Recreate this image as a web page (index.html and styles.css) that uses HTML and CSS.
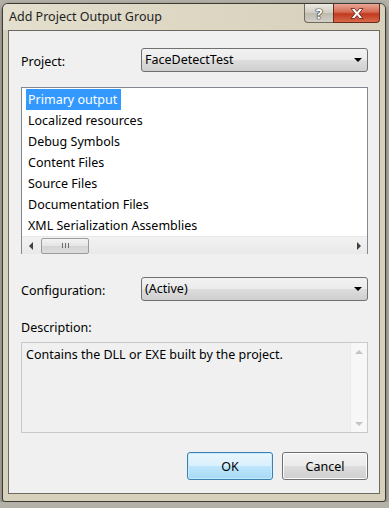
FILE: index.html
```html
<!DOCTYPE html>
<html lang="en">
<head>
  <meta charset="utf-8">
  <title>Add Project Output Group</title>
  <link rel="stylesheet" href="styles.css">
</head>
<body>
  <div class="window">
    <div class="titlebar">
      <span class="title">Add Project Output Group</span>
      <div class="caption-buttons">
        <span class="cap-btn help">?</span>
        <span class="cap-btn close">
          <svg width="14" height="11" viewBox="0 0 14 11">
            <path d="M1 0.5 H4.5 L7 3.5 L9.5 0.5 H13 L9 5.5 L13 10.5 H9.5 L7 7.5 L4.5 10.5 H1 L5 5.5 Z" fill="#fff" stroke="#5a1b10" stroke-width="0.8"/>
          </svg>
        </span>
      </div>
    </div>

    <div class="client">
      <div class="field-row">
        <label>Project:</label>
        <div class="combo">FaceDetectTest<span class="arrow"></span></div>
      </div>

      <div class="listbox">
        <ul class="items">
          <li><span class="selected">Primary output</span></li>
          <li><span>Localized resources</span></li>
          <li><span>Debug Symbols</span></li>
          <li><span>Content Files</span></li>
          <li><span>Source Files</span></li>
          <li><span>Documentation Files</span></li>
          <li><span>XML Serialization Assemblies</span></li>
        </ul>
        <div class="hscroll">
          <span class="sb-arrow left"></span>
          <div class="track">
            <div class="thumb"><span class="grip"></span></div>
          </div>
          <span class="sb-arrow right"></span>
        </div>
      </div>

      <div class="field-row config">
        <label>Configuration:</label>
        <div class="combo">(Active)<span class="arrow"></span></div>
      </div>

      <div class="desc-label">Description:</div>
      <div class="descbox">
        <p class="desc-text">Contains the DLL or EXE built by the project.</p>
        <div class="vscroll">
          <span class="sb-arrow up"></span>
          <span class="sb-arrow down"></span>
        </div>
      </div>

      <div class="buttons">
        <button class="btn default">OK</button>
        <button class="btn">Cancel</button>
      </div>
    </div>
  </div>
</body>
</html>
```

FILE: styles.css
```css
body {
  margin: 0;
  background: #b4b1a8;
  font-family: "Noto Sans", "Open Sans", sans-serif;
  font-size: 12.5px;
  color: #000;
}
.window {
  box-sizing: border-box;
  width: 384px;
  height: 499px;
  margin: 3px 0 0 2px;
  border: 1px solid #3b3a35;
  border-radius: 6px 6px 3px 3px;
  background: #d7d0bb;
  padding: 0 5px 7px 5px;
  box-shadow: 0 2px 5px rgba(0, 0, 0, 0.45);
}
/* title bar */
.titlebar {
  height: 26px;
  display: flex;
  justify-content: space-between;
  background: linear-gradient(to right, #e4dfce 0%, #ddd7c4 45%, #d7d0bb 100%);
  margin: 0 -5px;
  padding: 0 0 0 6px;
  border-radius: 5px 5px 0 0;
}
.title {
  font-size: 12.5px;
  line-height: 25px;
  color: #1e1e1e;
}
.caption-buttons {
  display: flex;
  align-items: flex-start;
  margin-right: 5px;
}
.cap-btn {
  box-sizing: border-box;
  height: 19px;
  display: flex;
  align-items: center;
  justify-content: center;
  border: 1px solid #6e6a5e;
  border-top: none;
}
.help {
  width: 29px;
  border-radius: 0 0 0 4px;
  border-right: none;
  background: linear-gradient(#ece9e1, #cfcbc0 50%, #bdb9ad 51%, #d3d0c6);
  font-weight: bold;
  font-size: 14px;
  color: #fff;
  text-shadow: 0 0 1px #333, 0 0 1px #333, 0 0 1px #333, 0 0 1px #333;
}
.close {
  width: 47px;
  border-radius: 0 0 4px 0;
  border-color: #6d2a1c;
  background: linear-gradient(#e9a797, #d46a52 45%, #c0391f 55%, #d9694a);
}
/* client area */
.client {
  box-sizing: border-box;
  height: 464px;
  border: 1px solid #6b6a62;
  background: #f0f0f0;
  padding: 17px 11px 0 12px;
}
.field-row {
  display: flex;
  align-items: center;
  height: 24px;
}
.field-row label {
  width: 120px;
  padding-top: 3px;
}
.combo {
  box-sizing: border-box;
  flex: 1;
  height: 24px;
  line-height: 20px;
  padding: 0 0 0 3px;
  border: 1px solid #707070;
  border-radius: 3px;
  background: linear-gradient(#f2f2f2 0%, #ebebeb 50%, #dddddd 51%, #cfcfcf 100%);
  display: flex;
  justify-content: space-between;
  align-items: center;
}
.arrow {
  width: 0;
  height: 0;
  margin-right: 5px;
  border-left: 4px solid transparent;
  border-right: 4px solid transparent;
  border-top: 4px solid #000;
}
/* list */
.listbox {
  box-sizing: border-box;
  height: 167px;
  margin-top: 15px;
  border: 1px solid #828790;
  background: #fff;
  display: flex;
  flex-direction: column;
}
.items {
  list-style: none;
  margin: 0;
  padding: 1px 0 0 4px;
  flex: 1;
}
.items li {
  height: 21px;
}
.items span {
  display: inline-block;
  line-height: 21px;
  padding: 0 4px 0 2px;
}
.items .selected {
  background: #3399ff;
  color: #fff;
}
.hscroll {
  height: 17px;
  display: flex;
  align-items: center;
  background: linear-gradient(#f2f2f2, #e9e9e9);
  border-top: 1px solid #e8e8e8;
}
.track {
  flex: 1;
  height: 100%;
  display: flex;
  align-items: center;
}
.thumb {
  box-sizing: border-box;
  width: 48px;
  height: 16px;
  margin-left: 2px;
  border: 1px solid #9b9b9b;
  border-radius: 2px;
  background: linear-gradient(#f3f3f3, #e4e4e4 50%, #d5d5d5 51%, #dcdcdc);
  display: flex;
  align-items: center;
  justify-content: center;
}
.grip {
  width: 7px;
  height: 5px;
  background: repeating-linear-gradient(to right, #6c6c6c 0 1px, transparent 1px 3px);
}
.sb-arrow {
  width: 17px;
  height: 17px;
  display: flex;
  align-items: center;
  justify-content: center;
  flex-shrink: 0;
}
.sb-arrow::after {
  content: "";
  width: 0;
  height: 0;
}
.sb-arrow.left::after {
  border-top: 4px solid transparent;
  border-bottom: 4px solid transparent;
  border-right: 4px solid #404040;
}
.sb-arrow.right::after {
  border-top: 4px solid transparent;
  border-bottom: 4px solid transparent;
  border-left: 4px solid #404040;
}
.sb-arrow.up::after {
  border-left: 4px solid transparent;
  border-right: 4px solid transparent;
  border-bottom: 4px solid #c4c4c4;
}
.sb-arrow.down::after {
  border-left: 4px solid transparent;
  border-right: 4px solid transparent;
  border-top: 4px solid #c4c4c4;
}
.config {
  margin-top: 23px;
}
.desc-label {
  margin-top: 18px;
  line-height: 17px;
}
/* description */
.descbox {
  box-sizing: border-box;
  height: 91px;
  margin-top: 6px;
  border: 1px solid #c9c9c9;
  background: #f0f0f0;
  display: flex;
}
.desc-text {
  flex: 1;
  margin: 3px 0 0 4px;
  line-height: 17px;
}
.vscroll {
  width: 16px;
  background: #f7f7f7;
  border-left: 1px solid #ececec;
  display: flex;
  flex-direction: column;
  justify-content: space-between;
}
.vscroll .sb-arrow {
  width: 16px;
}
/* buttons */
.buttons {
  display: flex;
  justify-content: flex-end;
  gap: 9px;
  margin-top: 19px;
}
.btn {
  box-sizing: border-box;
  width: 86px;
  height: 28px;
  font-family: inherit;
  font-size: 12.5px;
  color: #000;
  border: 1px solid #707070;
  border-radius: 3px;
  background: linear-gradient(#f2f2f2 0%, #ebebeb 50%, #dddddd 51%, #cfcfcf 100%);
  box-shadow: inset 0 0 0 1px #fcfcfc;
}
.btn.default {
  border-color: #3c7fb1;
  background: linear-gradient(#eaf6fd 0%, #d9f0fc 50%, #bee6fd 51%, #a7d9f5 100%);
  box-shadow: inset 0 0 0 1px #c5ecfb;
}
```
